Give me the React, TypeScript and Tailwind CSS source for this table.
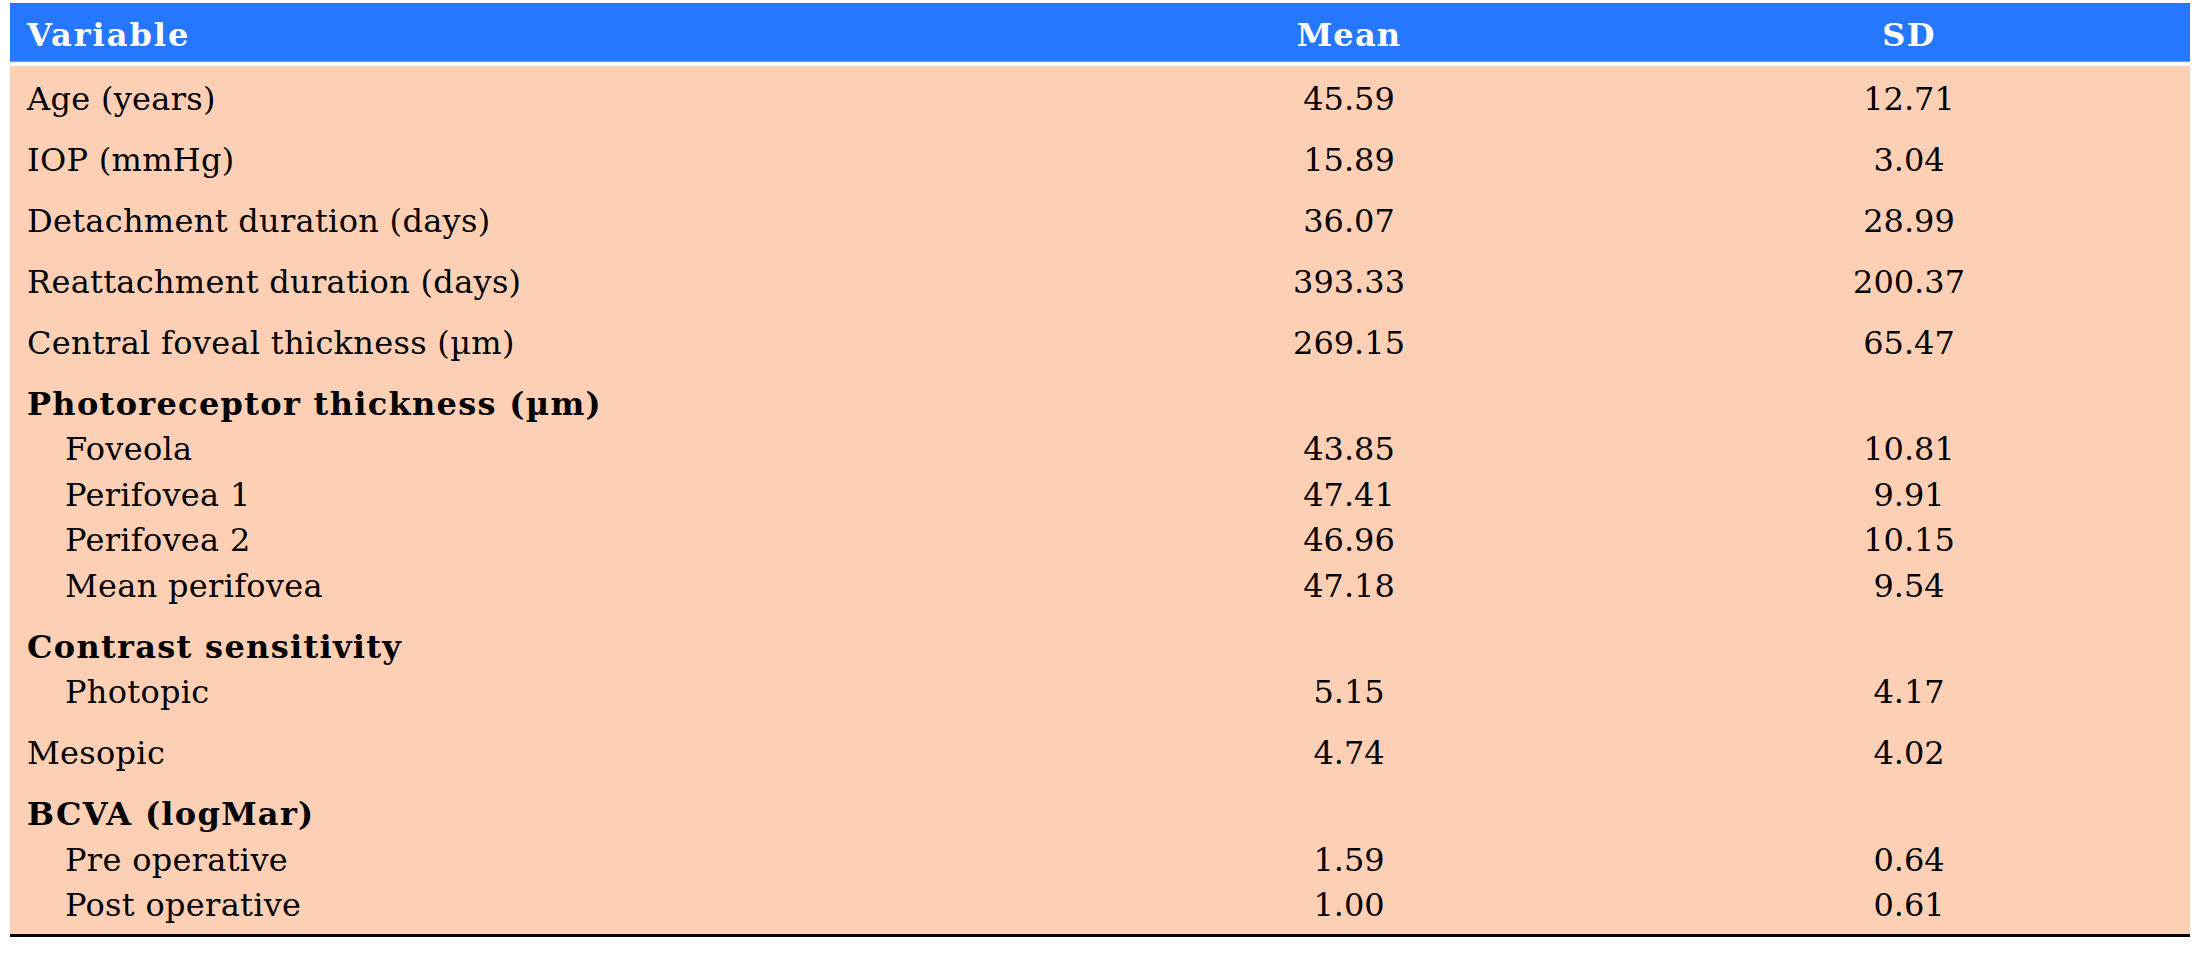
import React from 'react';

type Line = { label: string; mean: string; sd: string; indent?: boolean };
type Group = { title?: string; lines: Line[] };

const groups: Group[] = [
  { lines: [{ label: 'Age (years)', mean: '45.59', sd: '12.71' }] },
  { lines: [{ label: 'IOP (mmHg)', mean: '15.89', sd: '3.04' }] },
  { lines: [{ label: 'Detachment duration (days)', mean: '36.07', sd: '28.99' }] },
  { lines: [{ label: 'Reattachment duration (days)', mean: '393.33', sd: '200.37' }] },
  { lines: [{ label: 'Central foveal thickness (µm)', mean: '269.15', sd: '65.47' }] },
  {
    title: 'Photoreceptor thickness (µm)',
    lines: [
      { label: 'Foveola', mean: '43.85', sd: '10.81', indent: true },
      { label: 'Perifovea 1', mean: '47.41', sd: '9.91', indent: true },
      { label: 'Perifovea 2', mean: '46.96', sd: '10.15', indent: true },
      { label: 'Mean perifovea', mean: '47.18', sd: '9.54', indent: true },
    ],
  },
  {
    title: 'Contrast sensitivity',
    lines: [{ label: 'Photopic', mean: '5.15', sd: '4.17', indent: true }],
  },
  { lines: [{ label: 'Mesopic', mean: '4.74', sd: '4.02' }] },
  {
    title: 'BCVA (logMar)',
    lines: [
      { label: 'Pre operative', mean: '1.59', sd: '0.64', indent: true },
      { label: 'Post operative', mean: '1.00', sd: '0.61', indent: true },
    ],
  },
];

const App = () => {
  return (
    <div className="w-[2208px] h-[956px] bg-white pt-[3px] px-[10px] font-['DejaVu_Serif',serif] text-[32px] text-black">
      <div className="w-[2180px]">
        {/* header */}
        <div className="grid grid-cols-[1060px_558px_562px] h-[59px] pt-[6px] items-center bg-[#2477fe] text-white font-bold tracking-[1.2px] border-b border-[#5c9bff]">
          <div className="pl-[17px] tracking-[2px]">Variable</div>
          <div className="text-center">Mean</div>
          <div className="text-center">SD</div>
        </div>
        <div className="h-[4px] bg-white" />

        {/* body */}
        <div className="bg-[#fdd0b6] border-b-[3px] border-black">
          {groups.map((g, i) => (
            <div key={i} className="grid grid-cols-[1060px_558px_562px] pt-[10.5px] pb-[5px] leading-[45.5px]">
              <div className="pl-[17px] tracking-[0.3px]">
                {g.title && <div className="font-bold tracking-[1.3px]">{g.title}</div>}
                {g.lines.map((l) => (
                  <div key={l.label} className={l.indent ? 'pl-[38px]' : ''}>{l.label}</div>
                ))}
              </div>
              <div className="text-center">
                {g.title && <div>&nbsp;</div>}
                {g.lines.map((l) => (
                  <div key={l.label}>{l.mean}</div>
                ))}
              </div>
              <div className="text-center">
                {g.title && <div>&nbsp;</div>}
                {g.lines.map((l) => (
                  <div key={l.label}>{l.sd}</div>
                ))}
              </div>
            </div>
          ))}
        </div>
      </div>
    </div>
  );
};

export default App;
